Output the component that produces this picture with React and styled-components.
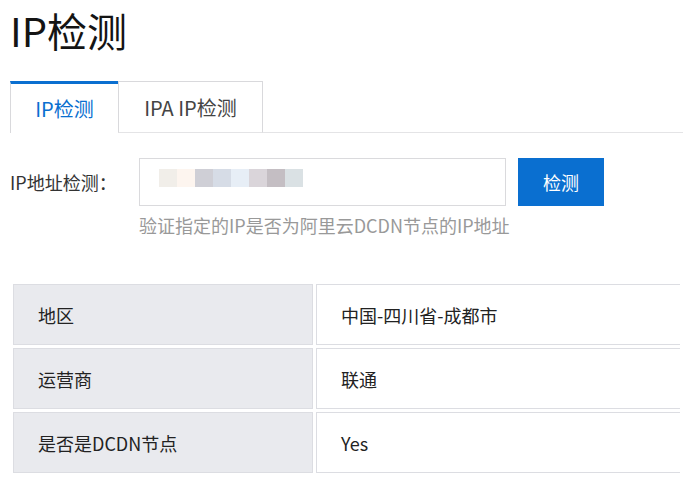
import React from 'react';
import styled, {createGlobalStyle} from 'styled-components';

const GlobalStyle = createGlobalStyle`
  html, body {
    margin: 0;
    background: #fff;
    overflow: hidden;
  }
  body {
    font-family: "Noto Sans CJK SC", "Noto Sans", sans-serif;
    color: #222;
  }
`;

const BLUE = '#0a6fd0';
const LINE = '#dcdde2';

const Page = styled.main`
  padding-left: 10px;
`;

const Title = styled.h1`
  margin: 0;
  font-size: 40px;
  font-weight: 400;
  line-height: 60px;
  color: #141414;
`;

const TabBar = styled.nav`
  display: flex;
  margin-top: 21px;
  height: 51px;
  border-bottom: 1px solid #e4e4e6;
`;

const Tab = styled.button`
  box-sizing: border-box;
  width: ${p => (p.active ? '108px' : '145px')};
  height: 52px;
  padding: 0;
  margin: 0 0 -1px;
  font: inherit;
  font-size: 20px;
  background: #fff;
  cursor: pointer;
  color: ${p => (p.active ? BLUE : '#444')};
  border: 1px solid #d9d9dc;
  border-top: ${p => (p.active ? `3px solid ${BLUE}` : '1px solid #d9d9dc')};
  border-right: ${p => (p.active ? 'none' : '1px solid #d9d9dc')};
  border-bottom: ${p => (p.active ? 'none' : '1px solid #e4e4e6')};
`;

const FormRow = styled.div`
  display: flex;
  align-items: center;
  margin-top: 25px;
  font-size: 18px;
`;

const Label = styled.label`
  width: 129px;
  line-height: 48px;
  color: #333;
`;

const Field = styled.div`
  box-sizing: border-box;
  display: flex;
  width: 367px;
  height: 48px;
  padding: 10px 0 0 19px;
  border: 1px solid #dadadd;
  background: #fff;
`;

const Mosaic = styled.span`
  width: 18px;
  height: 18px;
  background: ${p => p.color};
`;

const Button = styled.button`
  width: 86px;
  height: 48px;
  margin-left: 12px;
  border: none;
  background: ${BLUE};
  color: #fff;
  font: inherit;
  font-size: 18px;
  cursor: pointer;
`;

const Hint = styled.p`
  margin: 7px 0 0 129px;
  font-size: 18px;
  line-height: 24px;
  color: #999;
`;

const Table = styled.table`
  margin-top: 44px;
  width: 673px;
  border-collapse: separate;
  border-spacing: 3px;
  font-size: 18px;
`;

const Cell = styled.td`
  box-sizing: border-box;
  height: 61px;
  padding: 0 0 0 24px;
  border: 1px solid ${LINE};
  border-right: ${p => (p.head ? `1px solid ${LINE}` : 'none')};
  background: ${p => (p.head ? '#e9eaee' : '#fff')};
  width: ${p => (p.head ? '300px' : 'auto')};
  color: #222;
`;

const mosaic = [
  '#f1eee9',
  '#fdf5ef',
  '#cfcfd6',
  '#d6dce6',
  '#e7eef6',
  '#dad5da',
  '#c4bec3',
  '#dae1e4',
];

const rows = [
  ['地区', '中国-四川省-成都市'],
  ['运营商', '联通'],
  ['是否是DCDN节点', 'Yes'],
];

export default function App() {
  return (
    <Page>
      <GlobalStyle />
      <Title>IP检测</Title>
      <TabBar>
        <Tab active>IP检测</Tab>
        <Tab>IPA IP检测</Tab>
      </TabBar>
      <FormRow>
        <Label>IP地址检测：</Label>
        <Field>
          {mosaic.map((c, i) => (
            <Mosaic key={i} color={c} />
          ))}
        </Field>
        <Button>检测</Button>
      </FormRow>
      <Hint>验证指定的IP是否为阿里云DCDN节点的IP地址</Hint>
      <Table>
        <tbody>
          {rows.map(([k, v]) => (
            <tr key={k}>
              <Cell head>{k}</Cell>
              <Cell>{v}</Cell>
            </tr>
          ))}
        </tbody>
      </Table>
    </Page>
  );
}
